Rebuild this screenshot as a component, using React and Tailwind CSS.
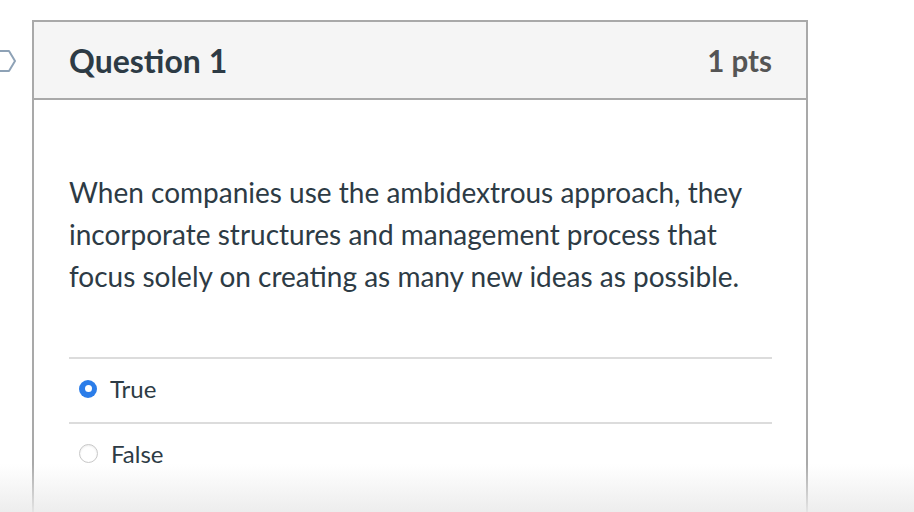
import React from 'react';

function FlagIcon() {
  return (
    <svg width="18" height="26" viewBox="0 0 18 26" fill="none">
      <path d="M-6 2 H9 L15 12 L9 22 H-6" stroke="#8ea2b6" strokeWidth="2" strokeLinejoin="round" />
    </svg>
  );
}

function Radio({ checked }) {
  if (checked) {
    return (
      <span className="w-[18px] h-[18px] rounded-full bg-[#2b7de9] flex items-center justify-center shrink-0">
        <span className="w-[7px] h-[7px] rounded-full bg-white" />
      </span>
    );
  }
  return <span className="w-[19px] h-[19px] rounded-full border border-[#c8c8c8] bg-white shrink-0 shadow-[inset_0_1px_2px_rgba(0,0,0,0.08)]" />;
}

function Answer({ label, checked, divider }) {
  return (
    <div className={`flex items-center gap-[13px] pl-[10px] pb-[4px] h-[65px] ${divider ? 'border-t-2 border-[#dcdcdc]' : ''}`}>
      <Radio checked={checked} />
      <span className="text-[24px] text-[#2d3b45]">{label}</span>
    </div>
  );
}

export default function App() {
  return (
    <div className="relative w-[914px] h-[512px] overflow-hidden bg-white" style={{ fontFamily: 'Lato, "Open Sans", sans-serif' }}>
      <div className="flex pt-5">
        <div className="w-8 shrink-0 pt-[29px]">
          <FlagIcon />
        </div>
        <div className="w-[776px] border-2 border-b-0 border-[#a9a9a9] h-[600px]">
          <div className="flex items-center justify-between h-[78px] bg-[#f5f5f5] border-b-2 border-[#a9a9a9] pl-[35px] pr-[34px]">
            <h2 className="text-[32px] font-bold text-[#2d3b45] leading-none pt-[2px]">Question 1</h2>
            <span className="text-[29.5px] font-bold text-[#555555] leading-none pt-[2px]">1 pts</span>
          </div>
          <div className="pl-[35px] pr-[34px] pt-[71px]">
            <p className="text-[28px] leading-[42px] text-[#2d3b45]">
              When companies use the ambidextrous approach, they incorporate structures and management process that focus solely on creating as many new ideas as possible.
            </p>
            <div className="mt-[60px]">
              <Answer label="True" checked divider />
              <Answer label="False" divider />
            </div>
          </div>
        </div>
      </div>
      <div className="absolute left-0 right-0 bottom-0 h-[48px] pointer-events-none bg-gradient-to-b from-white/0 to-[#ebebeb]/90" />
    </div>
  );
}
